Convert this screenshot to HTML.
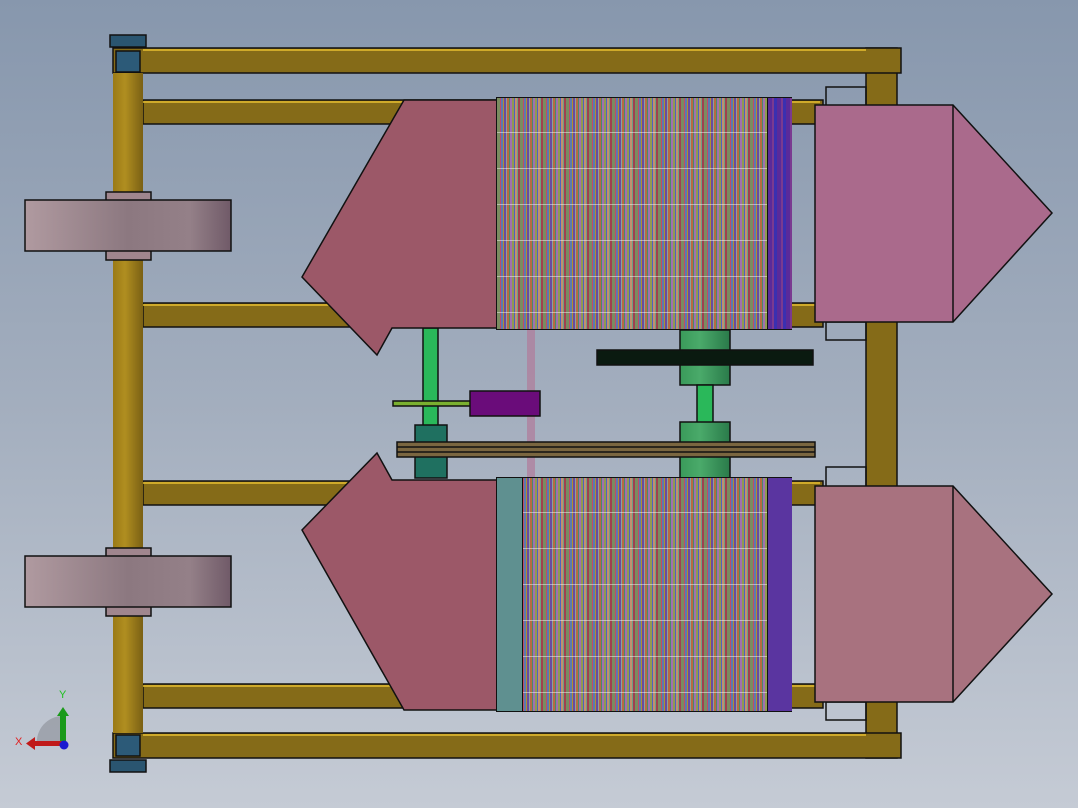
<!DOCTYPE html>
<html><head><meta charset="utf-8"><style>
html,body{margin:0;padding:0}
body{width:1078px;height:808px;overflow:hidden;background:linear-gradient(#8797ad,#a3aebe 50%,#c5cbd5);position:relative;font-family:"Liberation Sans",sans-serif}
.core{position:absolute;border:1.5px solid #111;box-sizing:border-box;
background:
repeating-linear-gradient(180deg,transparent 0 34px,rgba(255,255,255,.45) 34px 35px,transparent 35px 36px),
repeating-linear-gradient(90deg,#7a8c60 0 3px,#c04a6a 3px 4px,#5a7ab0 4px 6px,#b09030 6px 7px,#6a4aa0 7px 9px,#8aa0a0 9px 10px,#b86a40 10px 12px,#4a8a6a 12px 13px,#a070b0 13px 15px,#909a50 15px 17px,#5060c0 17px 18px,#c09070 18px 20px,#70a080 20px 21px,#a04050 21px 23px)}
svg{position:absolute;left:0;top:0}
</style></head><body>
<svg width="1078" height="808" viewBox="0 0 1078 808">
<defs>
<linearGradient id="post" x1="0" x2="1"><stop offset="0" stop-color="#9a7a16"/><stop offset=".4" stop-color="#b08e20"/><stop offset="1" stop-color="#7a6014"/></linearGradient>
<linearGradient id="pul" x1="0" x2="1"><stop offset="0" stop-color="#b09aa0"/><stop offset=".5" stop-color="#8c7880"/><stop offset=".8" stop-color="#948088"/><stop offset="1" stop-color="#705a68"/></linearGradient>
<linearGradient id="gc" x1="0" x2="1"><stop offset="0" stop-color="#3a9a5a"/><stop offset=".4" stop-color="#4aaa6a"/><stop offset="1" stop-color="#2a7a4a"/></linearGradient>
</defs>
<g stroke="#111" stroke-width="1.5">
<rect x="143" y="100" width="680" height="24" fill="#856b18"/>
<rect x="143" y="303" width="680" height="24" fill="#856b18"/>
<rect x="143" y="481" width="680" height="24" fill="#856b18"/>
<rect x="143" y="684" width="680" height="24" fill="#856b18"/>
<rect x="866" y="48" width="31" height="710" fill="#856b18"/>
<rect x="826" y="87" width="40" height="20" fill="none"/>
<rect x="826" y="322" width="40" height="18" fill="none"/>
<rect x="826" y="467" width="40" height="20" fill="none"/>
<rect x="826" y="702" width="40" height="18" fill="none"/>
<rect x="113" y="48" width="788" height="25" fill="#856b18"/>
<rect x="113" y="733" width="788" height="25" fill="#856b18"/>
</g>
<g stroke="#e8c030" stroke-width="1.5">
<line x1="143" y1="50" x2="866" y2="50"/><line x1="143" y1="735" x2="866" y2="735"/>
<line x1="143" y1="102" x2="820" y2="102"/><line x1="143" y1="305" x2="820" y2="305"/>
<line x1="143" y1="483" x2="820" y2="483"/><line x1="143" y1="686" x2="820" y2="686"/>
</g>
<g stroke="#111" stroke-width="1.5">
<rect x="113" y="73" width="30" height="660" fill="url(#post)" stroke="none"/>
<rect x="116" y="51" width="24" height="21" fill="#2c5a78"/>
<rect x="116" y="735" width="24" height="21" fill="#2c5a78"/>
<rect x="110" y="35" width="36" height="12" fill="#2a5570"/>
<rect x="110" y="760" width="36" height="12" fill="#2a5570"/>
<rect x="106" y="192" width="45" height="68" fill="#a0868e"/>
<rect x="25" y="200" width="206" height="51" fill="url(#pul)"/>
<rect x="106" y="548" width="45" height="68" fill="#a0868e"/>
<rect x="25" y="556" width="206" height="51" fill="url(#pul)"/>
<rect x="423" y="328" width="15" height="98" fill="#2ab85a"/>
<rect x="415" y="425" width="32" height="53" fill="#1f7060"/>
<rect x="527" y="330" width="8" height="148" fill="#b07a9a" stroke="none" opacity=".7"/>
<rect x="393" y="401" width="78" height="5" fill="#7ab030"/>
<rect x="470" y="391" width="70" height="25" fill="#6a0c7a"/>
<rect x="680" y="330" width="50" height="55" fill="url(#gc)"/>
<rect x="697" y="385" width="16" height="38" fill="#2ab85a"/>
<rect x="680" y="422" width="50" height="56" fill="url(#gc)"/>
<rect x="597" y="350" width="216" height="15" fill="#0a1a10"/>
<rect x="397" y="442" width="418" height="15" fill="#7a6640"/>
<line x1="397" y1="447" x2="815" y2="447"/><line x1="397" y1="452" x2="815" y2="452"/>
<polygon points="404,100 497,100 497,328 392,328 377,355 302,277" fill="#9c5868"/>
<polygon points="377,453 392,480 497,480 497,710 404,710 302,530" fill="#9c5868"/>
<polygon points="815,105 953,105 1052,213 953,322 815,322" fill="#aa6a8c"/>
<line x1="953" y1="105" x2="953" y2="322"/>
<polygon points="815,486 953,486 1052,594 953,702 815,702" fill="#a8727f"/>
<line x1="953" y1="486" x2="953" y2="702"/>
</g>
</svg>
<div class="core" style="left:496px;top:97px;width:296px;height:233px"></div>
<div style="position:absolute;left:767px;top:98px;width:24px;height:231px;background:repeating-linear-gradient(90deg,#5a2a9a 0 4px,#7a3a90 4px 6px,#3a30b0 6px 9px);border-left:1.5px solid #111"></div>
<div class="core" style="left:496px;top:477px;width:296px;height:235px"></div>
<div style="position:absolute;left:497px;top:478px;width:25px;height:233px;background:#5f9090;border-right:1.5px solid #111"></div>
<div style="position:absolute;left:767px;top:478px;width:24px;height:233px;background:#5a35a0;border-left:1.5px solid #111"></div>
<svg width="1078" height="808" viewBox="0 0 1078 808">
<path d="M63 745 L63 716 A26 26 0 0 0 37 745 Z" fill="#8a8e96" opacity=".6"/>
<rect x="60" y="714" width="6" height="31" fill="#1a9a1a"/>
<polygon points="57,716 63,707 69,716" fill="#1a9a1a"/>
<rect x="34" y="741" width="29" height="5" fill="#c01a1a"/>
<polygon points="35,737 26,743.5 35,750" fill="#c01a1a"/>
<circle cx="64" cy="745" r="4.5" fill="#1a1ad0"/>
<text x="59" y="698" font-size="11" fill="#20c020">Y</text>
<text x="15" y="745" font-size="11" fill="#e02020">X</text>
</svg>
</body></html>
